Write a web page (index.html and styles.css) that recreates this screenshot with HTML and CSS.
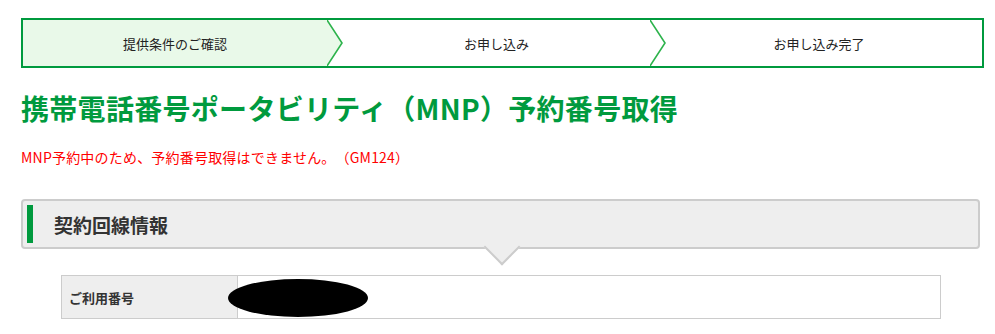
FILE: index.html
```html
<!DOCTYPE html>
<html lang="ja">

<head>
    <meta charset="UTF-8">
    <meta name="viewport" content="width=device-width, initial-scale=1.0">
    <title>MNP予約番号取得</title>
    <link rel="stylesheet" href="styles.css">
</head>

<body>

    <div class="container">

        <!-- ステップ -->
        <div class="steps">
            <div class="step step-current">提供条件のご確認</div>
            <svg class="chevron chevron-current" width="16" height="46" viewBox="0 0 16 46">
                <polygon points="0,0 15,23 0,46" fill="#e9f9e9"/>
                <polyline points="0,0 15,23 0,46" fill="none" stroke="#2db34c" stroke-width="1.6"/>
            </svg>
            <div class="step step-middle">お申し込み</div>
            <svg class="chevron" width="16" height="46" viewBox="0 0 16 46">
                <polyline points="0,0 15,23 0,46" fill="none" stroke="#2db34c" stroke-width="1.6"/>
            </svg>
            <div class="step step-last">お申し込み完了</div>
        </div>

        <h1 class="page-title">携帯電話番号ポータビリティ（MNP）予約番号取得</h1>

        <p class="error">MNP予約中のため、予約番号取得はできません。（GM124）</p>

        <!-- 契約回線情報 -->
        <div class="section-head">
            <h2>契約回線情報</h2>
        </div>

        <table class="info">
            <tr>
                <th>ご利用番号</th>
                <td><span class="mask"></span></td>
            </tr>
        </table>

    </div>

</body>

</html>
```

FILE: styles.css
```css
body {
    margin: 0;
    padding: 0;
    background-color: #fff;
    color: #222;
    font-family: "Noto Sans CJK JP", "Noto Sans", sans-serif;
    text-spacing-trim: space-all;
}

.container {
    padding: 18px 11px 0 21px;
}

/* ステップ */
.steps {
    display: flex;
    height: 46px;
    border: 2px solid #009a3e;
    font-size: 13px;
}

.step {
    display: flex;
    align-items: center;
    justify-content: center;
}

.step-current {
    width: 304px;
    background-color: #e9f9e9;
}

.step-middle {
    width: 307px;
}

.step-last {
    flex: 1;
    padding-right: 10px;
}

.chevron {
    flex-shrink: 0;
    display: block;
}

/* タイトル */
.page-title {
    margin: 23px 0 0;
    font-size: 28px;
    line-height: 35px;
    letter-spacing: 0.3px;
    color: #009a3e;
    font-weight: bold;
}

.error {
    margin: 21px 0 0;
    font-size: 14px;
    line-height: 20px;
    letter-spacing: 0.2px;
    color: #ff0000;
}

/* 見出し */
.section-head {
    position: relative;
    display: flex;
    align-items: center;
    height: 46px;
    margin: 32px 4px 0 0;
    padding-left: 31px;
    background-color: #eeeeee;
    border: 2px solid #cccccc;
    border-radius: 4px;
}

.section-head::before {
    content: "";
    position: absolute;
    left: 4px;
    top: 4px;
    bottom: 4px;
    width: 6px;
    background-color: #009a3e;
}

.section-head::after {
    content: "";
    position: absolute;
    left: 50%;
    bottom: -13px;
    width: 24px;
    height: 24px;
    margin-left: -12px;
    background-color: #eeeeee;
    border-right: 2px solid #cccccc;
    border-bottom: 2px solid #cccccc;
    transform: rotate(45deg);
}

.section-head h2 {
    margin: 0;
    font-size: 19px;
    font-weight: bold;
    color: #333;
}

/* テーブル */
.info {
    width: 880px;
    margin: 26px 0 0 40px;
    border-collapse: collapse;
}

.info th,
.info td {
    height: 42px;
    border: 1px solid #cccccc;
    padding: 0;
}

.info th {
    width: 168px;
    padding-left: 7px;
    text-align: left;
    background-color: #eeeeee;
    font-size: 13px;
    font-weight: bold;
    color: #333;
}

.info td {
    position: relative;
}

.mask {
    position: absolute;
    left: -10px;
    top: 3px;
    width: 140px;
    height: 38px;
    border-radius: 50%;
    background-color: #000;
}
```
